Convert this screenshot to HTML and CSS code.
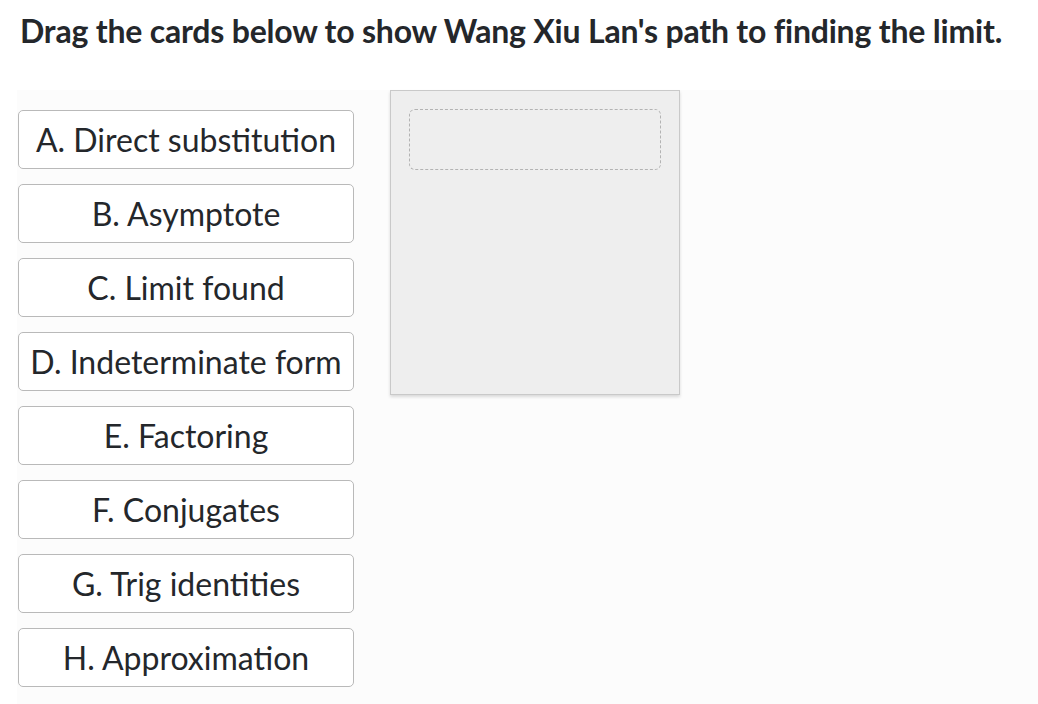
FILE: index.html
```html
<!DOCTYPE html>
<html>
<head>
<meta charset="utf-8">
<link rel="stylesheet" href="styles.css">
</head>
<body>
<h1 class="title">Drag the cards below to show Wang Xiu Lan's path to finding the limit.</h1>
<div class="workspace">
  <div class="cards">
    <div class="card">A. Direct substitution</div>
    <div class="card">B. Asymptote</div>
    <div class="card">C. Limit found</div>
    <div class="card">D. Indeterminate form</div>
    <div class="card">E. Factoring</div>
    <div class="card">F. Conjugates</div>
    <div class="card">G. Trig identities</div>
    <div class="card">H. Approximation</div>
  </div>
  <div class="dropzone">
    <div class="slot"></div>
  </div>
</div>
</body>
</html>
```
FILE: styles.css
```css
html, body {
  margin: 0;
  padding: 0;
  background: #ffffff;
  font-family: Lato, "Liberation Sans", sans-serif;
  color: #24272b;
}
.title {
  margin: 0;
  padding: 11px 0 0 20px;
  height: 90px;
  box-sizing: border-box;
  font-size: 32px;
  font-weight: 700;
  line-height: 40px;
  letter-spacing: -0.2px;
}
.workspace {
  margin-left: 17px;
  background: #fcfcfc;
  display: flex;
  align-items: flex-start;
  min-height: 614px;
}
.cards {
  display: flex;
  flex-direction: column;
  gap: 15px;
  margin: 20px 0 0 1px;
}
.card {
  width: 336px;
  height: 59px;
  box-sizing: border-box;
  border: 1px solid #b9b9b9;
  border-radius: 5px;
  background: #ffffff;
  display: flex;
  align-items: center;
  justify-content: center;
  font-size: 32px;
  line-height: 1;
  white-space: nowrap;
}
.dropzone {
  margin-left: 36px;
  width: 290px;
  height: 305px;
  box-sizing: border-box;
  background: #eeeeee;
  border: 1px solid #c9c9c9;
  box-shadow: 0 2px 3px rgba(0, 0, 0, 0.14);
  padding: 18px;
}
.slot {
  height: 61px;
  box-sizing: border-box;
  border: 1px dashed #b3b3b3;
  border-radius: 6px;
}
```
